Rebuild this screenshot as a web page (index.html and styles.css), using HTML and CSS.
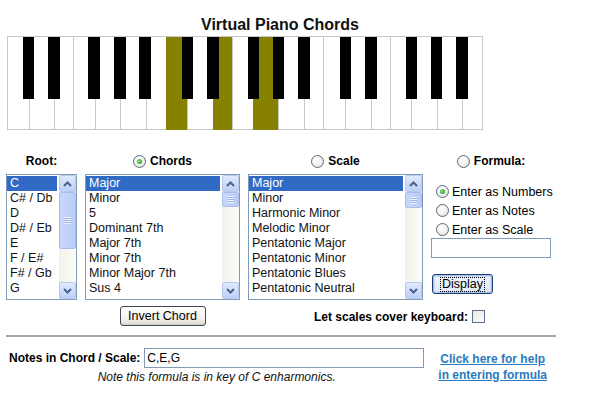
FILE: index.html
```html
<!DOCTYPE html>
<html>
<head>
<meta charset="utf-8">
<link rel="stylesheet" href="styles.css">
</head>
<body>
<div class="page">
  <h1 class="title">Virtual Piano Chords</h1>
  <svg class="keyboard" width="477" height="95" viewBox="0 0 477 95" shape-rendering="crispEdges">
    <g class="whites" fill="#fff" stroke="#c8c8c8" stroke-width="1">
      <rect x="0.5" y="0.5" width="22" height="93"/>
      <rect x="22.5" y="0.5" width="25" height="93"/>
      <rect x="47.5" y="0.5" width="19" height="93"/>
      <rect x="66.5" y="0.5" width="22" height="93"/>
      <rect x="88.5" y="0.5" width="25" height="93"/>
      <rect x="113.5" y="0.5" width="26" height="93"/>
      <rect x="139.5" y="0.5" width="20" height="93"/>
      <rect x="159.5" y="0.5" width="21" height="93"/>
      <rect x="180.5" y="0.5" width="26" height="93"/>
      <rect x="206.5" y="0.5" width="19" height="93"/>
      <rect x="225.5" y="0.5" width="21" height="93"/>
      <rect x="246.5" y="0.5" width="25" height="93"/>
      <rect x="271.5" y="0.5" width="26" height="93"/>
      <rect x="297.5" y="0.5" width="19" height="93"/>
      <rect x="316.5" y="0.5" width="22" height="93"/>
      <rect x="338.5" y="0.5" width="26" height="93"/>
      <rect x="364.5" y="0.5" width="19" height="93"/>
      <rect x="383.5" y="0.5" width="21" height="93"/>
      <rect x="404.5" y="0.5" width="26" height="93"/>
      <rect x="430.5" y="0.5" width="25" height="93"/>
      <rect x="455.5" y="0.5" width="20" height="93"/>
    </g>
    <g class="lit" fill="#878100">
      <rect x="159" y="1" width="21" height="93"/>
      <rect x="206" y="1" width="19" height="93"/>
      <rect x="246" y="1" width="25" height="93"/>
    </g>
    <g class="blacks" fill="#000">
      <rect x="16" y="1" width="11" height="62"/>
      <rect x="41" y="1" width="12" height="62"/>
      <rect x="81" y="1" width="12" height="62"/>
      <rect x="107" y="1" width="12" height="62"/>
      <rect x="132" y="1" width="12" height="62"/>
      <rect x="175" y="1" width="11" height="62"/>
      <rect x="200" y="1" width="12" height="62"/>
      <rect x="241" y="1" width="11" height="62"/>
      <rect x="266" y="1" width="11" height="62"/>
      <rect x="291" y="1" width="12" height="62"/>
      <rect x="333" y="1" width="11" height="62"/>
      <rect x="358" y="1" width="12" height="62"/>
      <rect x="399" y="1" width="11" height="62"/>
      <rect x="424" y="1" width="11" height="62"/>
      <rect x="449" y="1" width="12" height="62"/>
    </g>
  </svg>

  <div class="form">
    <div class="hdr">Root:</div>
    <div class="hdr"><span class="radio checked"></span>Chords</div>
    <div class="hdr"><span class="radio"></span>Scale</div>
    <div class="hdr"><span class="radio"></span>Formula:</div>

    <div class="listbox">
      <ul class="items">
        <li class="sel">C</li>
        <li>C# / Db</li>
        <li>D</li>
        <li>D# / Eb</li>
        <li>E</li>
        <li>F / E#</li>
        <li>F# / Gb</li>
        <li>G</li>
      </ul>
      <div class="sbar">
        <div class="sbtn"><svg width="9" height="6" viewBox="0 0 9 6"><polyline points="1,5 4.5,1.5 8,5" fill="none" stroke="#4d6185" stroke-width="2"/></svg></div>
        <div class="track"><div class="thumb" style="height:57px"><span class="grip"></span></div></div>
        <div class="sbtn"><svg width="9" height="6" viewBox="0 0 9 6"><polyline points="1,1 4.5,4.5 8,1" fill="none" stroke="#4d6185" stroke-width="2"/></svg></div>
      </div>
    </div>

    <div class="listbox">
      <ul class="items">
        <li class="sel">Major</li>
        <li>Minor</li>
        <li>5</li>
        <li>Dominant 7th</li>
        <li>Major 7th</li>
        <li>Minor 7th</li>
        <li>Minor Major 7th</li>
        <li>Sus 4</li>
      </ul>
      <div class="sbar">
        <div class="sbtn"><svg width="9" height="6" viewBox="0 0 9 6"><polyline points="1,5 4.5,1.5 8,5" fill="none" stroke="#4d6185" stroke-width="2"/></svg></div>
        <div class="track"><div class="thumb" style="height:15px"><span class="grip"></span></div></div>
        <div class="sbtn"><svg width="9" height="6" viewBox="0 0 9 6"><polyline points="1,1 4.5,4.5 8,1" fill="none" stroke="#4d6185" stroke-width="2"/></svg></div>
      </div>
    </div>

    <div class="listbox">
      <ul class="items">
        <li class="sel">Major</li>
        <li>Minor</li>
        <li>Harmonic Minor</li>
        <li>Melodic Minor</li>
        <li>Pentatonic Major</li>
        <li>Pentatonic Minor</li>
        <li>Pentatonic Blues</li>
        <li>Pentatonic Neutral</li>
      </ul>
      <div class="sbar">
        <div class="sbtn"><svg width="9" height="6" viewBox="0 0 9 6"><polyline points="1,5 4.5,1.5 8,5" fill="none" stroke="#4d6185" stroke-width="2"/></svg></div>
        <div class="track"><div class="thumb" style="height:16px"><span class="grip"></span></div></div>
        <div class="sbtn"><svg width="9" height="6" viewBox="0 0 9 6"><polyline points="1,1 4.5,4.5 8,1" fill="none" stroke="#4d6185" stroke-width="2"/></svg></div>
      </div>
    </div>

    <div class="formula">
      <div class="opt"><span class="radio checked"></span>Enter as Numbers</div>
      <div class="opt"><span class="radio"></span>Enter as Notes</div>
      <div class="opt"><span class="radio"></span>Enter as Scale</div>
      <div class="textbox"></div>
      <button class="btn display"><span class="focus">Display</span></button>
    </div>

    <div class="cell-center"><button class="btn invert">Invert Chord</button></div>
    <div class="cover">Let scales cover keyboard: <span class="checkbox"></span></div>
  </div>

  <div class="rule"></div>

  <div class="bottom">
    <div class="notes">
      <div class="notes-row">
        <span class="notes-label">Notes in Chord / Scale:</span>
        <div class="notes-input">C,E,G</div>
      </div>
      <div class="note">Note this formula is in key of C enharmonics.</div>
    </div>
    <a class="help" href="#">Click here for help<br>in entering formula</a>
  </div>
</div>
</body>
</html>
```

FILE: styles.css
```css
* { box-sizing: border-box; }

body {
  margin: 0;
  background: #fff;
  font-family: "Liberation Sans", Arial, sans-serif;
  color: #000;
}

.page {
  width: 600px;
  height: 400px;
  overflow: hidden;
}

.title {
  margin: 0;
  padding-top: 16px;
  width: 560px;
  text-align: center;
  font-size: 16px;
  line-height: 18px;
  font-weight: bold;
  color: #111;
}

.keyboard {
  display: block;
  margin: 2px 0 0 7px;
}

.form {
  display: grid;
  grid-template-columns: 71px 155px 175px 120px;
  grid-template-rows: 16px 126px 20px;
  column-gap: 8px;
  row-gap: 5px;
  padding-left: 6px;
  margin-top: 22px;
}

.hdr {
  display: flex;
  align-items: center;
  justify-content: center;
  gap: 4px;
  font-size: 12px;
  font-weight: bold;
  line-height: 16px;
}

.radio {
  display: inline-block;
  width: 13px;
  height: 13px;
  border: 1px solid #5a6a80;
  border-radius: 50%;
  background: radial-gradient(circle at 40% 35%, #ffffff 0%, #f2f2ee 50%, #d6d6cf 100%);
  position: relative;
  flex: none;
}

.radio.checked::after {
  content: "";
  position: absolute;
  left: 3px;
  top: 3px;
  width: 5px;
  height: 5px;
  border-radius: 50%;
  background: radial-gradient(circle at 40% 40%, #8fe08f 0%, #2fa52f 70%, #1f8a1f 100%);
}

.listbox {
  display: flex;
  border: 1px solid #7f9db9;
  background: #fff;
  height: 126px;
  overflow: hidden;
}

.items {
  list-style: none;
  margin: 0;
  padding: 1px 2px 0 0;
  flex: 1;
  min-width: 0;
  overflow: hidden;
}

.items li {
  height: 15px;
  line-height: 15px;
  padding-left: 3px;
  font-size: 12.5px;
  white-space: nowrap;
  color: #111;
}

.items li.sel {
  background: #316ac5;
  color: #fff;
}

.sbar {
  width: 17px;
  flex: none;
  display: flex;
  flex-direction: column;
  background: #f4f3ee;
}

.sbtn {
  height: 17px;
  flex: none;
  display: flex;
  align-items: center;
  justify-content: center;
  border: 1px solid #b9c8ec;
  border-radius: 2px;
  background: linear-gradient(#e0e9fd, #bdd0fa);
}

.track {
  flex: 1;
  background: linear-gradient(90deg, #f3f1ea, #fbfbf8);
}

.thumb {
  border: 1px solid #a8bdea;
  border-radius: 2px;
  background: linear-gradient(90deg, #c7d6fb, #b9cdf8);
  display: flex;
  align-items: center;
  justify-content: center;
}

.grip {
  display: block;
  width: 7px;
  height: 7px;
  background: repeating-linear-gradient(#eef3ff 0 1px, #9cb4e8 1px 2px);
}

.formula {
  padding-top: 8px;
  display: flex;
  flex-direction: column;
  align-items: flex-start;
}

.opt {
  display: flex;
  align-items: center;
  gap: 3px;
  height: 19px;
  padding-left: 5px;
  font-size: 12.5px;
  white-space: nowrap;
}

.textbox {
  margin-top: -1px;
  width: 120px;
  height: 20px;
  border: 1px solid #7f9db9;
  background: #fff;
}

.btn {
  font-family: "Liberation Sans", Arial, sans-serif;
  font-size: 12.5px;
  color: #000;
  height: 20px;
  padding: 0;
  border: 1px solid #3d4a5a;
  border-radius: 3px;
  background: linear-gradient(#ffffff, #f4f3ee 60%, #dcdad0);
  box-shadow: inset 0 -1px 0 #d6d0bd;
}

.cell-center {
  grid-column: 2;
  display: flex;
  justify-content: center;
  margin-top: 1px;
}

.invert {
  width: 86px;
}

.display {
  margin-top: 16px;
  margin-left: 1px;
  width: 61px;
  border-color: #1f3f70;
  background: linear-gradient(#f2f6fe, #dfe8f8);
  box-shadow: inset 0 0 0 1px #a8c2ef, inset 0 0 0 2px #cfdcf6;
  display: flex;
  align-items: center;
  justify-content: center;
}

.display .focus {
  outline: 1px dotted #000;
  padding: 0 1px;
  line-height: 13px;
}

.cover {
  grid-column: 3 / 5;
  display: flex;
  align-items: center;
  justify-content: center;
  gap: 4px;
  font-size: 12px;
  font-weight: bold;
  margin-top: 3px;
}

.checkbox {
  display: inline-block;
  width: 13px;
  height: 13px;
  border: 1px solid #5d6f8a;
  background: linear-gradient(135deg, #e6e6e0, #ffffff);
}

.rule {
  margin: 10px 0 0 6px;
  width: 550px;
  height: 2px;
  background: #a8a8a8;
}

.bottom {
  display: flex;
  align-items: flex-start;
  margin-top: 11px;
}

.notes {
  padding-left: 9px;
  display: flex;
  flex-direction: column;
}

.notes-row {
  display: flex;
  align-items: center;
  gap: 4px;
}

.notes-label {
  font-size: 12px;
  font-weight: bold;
}

.notes-input {
  width: 280px;
  height: 20px;
  border: 1px solid #7f9db9;
  font-size: 12px;
  line-height: 18px;
  padding-left: 2px;
}

.note {
  text-align: center;
  font-size: 12px;
  font-style: italic;
  line-height: 14px;
  margin-top: 2px;
  color: #111;
}

.help {
  margin-left: 14px;
  margin-top: 3px;
  text-align: center;
  font-size: 12px;
  font-weight: bold;
  line-height: 16px;
  color: #2a7ac0;
  text-decoration: underline;
}
```
